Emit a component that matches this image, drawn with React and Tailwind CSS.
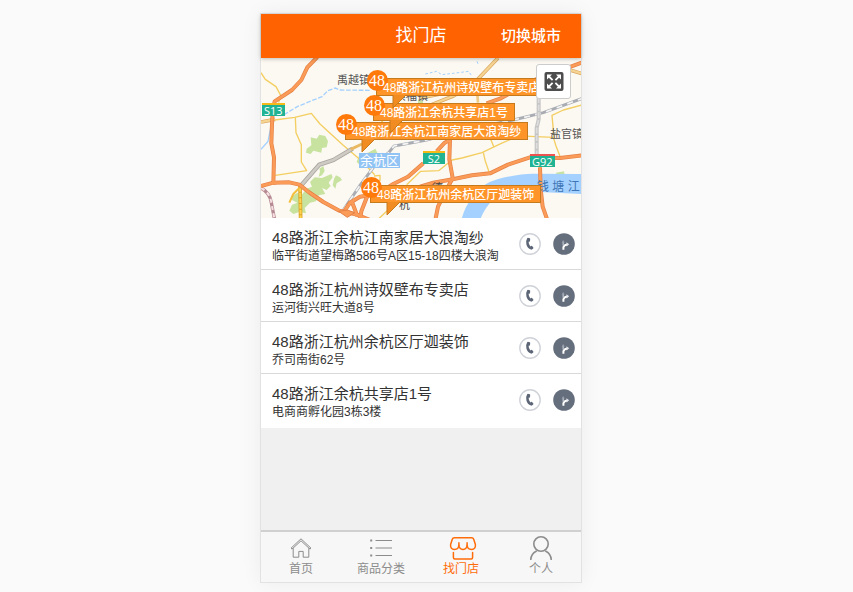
const stores = [
  { name: '48路浙江余杭江南家居大浪淘纱', address: '临平街道望梅路586号A区15-18四楼大浪淘' },
  { name: '48路浙江杭州诗奴壁布专卖店', address: '运河街兴旺大道8号' },
  { name: '48路浙江杭州余杭区厅迦装饰', address: '乔司南街62号' },
  { name: '48路浙江余杭共享店1号', address: '电商商孵化园3栋3楼' },
];

const pins = [
  { name: '48路浙江余杭江南家居大浪淘纱', place: 'left-[84px] top-[64px]' },
  { name: '48路浙江余杭共享店1号', place: 'left-[112px] top-[45px]' },
  { name: '48路浙江杭州诗奴壁布专卖店', place: 'left-[115px] top-[20px]' },
  { name: '48路浙江杭州余杭区厅迦装饰', place: 'left-[109px] top-[127px]' },
];

function MapDrawing() {
  return (
    <svg className="block h-full w-full" viewBox="3 6 960 480" preserveAspectRatio="xMinYMin slice" aria-hidden="true">
      <rect x="0" y="0" width="970" height="492" fill="#fcf9f2" />

      <g fill="#c8e3a0">
        <path d="M152 244 L170 248 L178 236 L196 240 L204 256 L200 274 L186 276 L184 290 L160 284 L152 294 L138 290 L140 278 L154 268 Z" />
        <path d="M178 338 L190 330 L194 345 L186 358 L176 362 L180 346 Z" />
        <path d="M186 366 L214 354 L218 364 L206 380 L212 390 L200 402 L186 396 L196 414 L176 418 L168 436 L150 440 L134 456 L138 472 L118 468 L100 474 L88 464 L96 446 L112 440 L96 432 L94 422 L112 410 L124 418 L140 398 L156 392 L150 378 L164 364 Z" />
        <path d="M222 368 L228 358 L240 364 L246 372 L230 382 L226 398 L218 388 Z" />
        <path d="M290 318 L298 296 L324 290 L346 278 L352 290 L336 310 L330 332 L308 334 Z" />
        <path d="M474 130 L490 136 L486 150 L474 146 Z" />
        <path d="M888 350 L912 346 L914 356 L890 357 Z" />
      </g>

      <path d="M604 492 Q614 452 636 426 Q660 384 712 370 Q780 352 822 353 L970 354 L970 414 L840 408 Q740 392 700 430 Q674 456 660 492 Z" fill="#a4d1ff" />

      <g fill="none" stroke="#a4d1ff" strokeWidth="4">
        <path d="M72 176 L112 152 L150 136 L186 122 L204 104 L226 96 L238 102 L330 103" strokeDasharray="14 5" />
        <path d="M3 280 L24 256 L34 206" />
        <path d="M496 54 L530 46 L545 56 L580 52 L626 46 L634 58 M651 16 L656 28" strokeDasharray="8 6" strokeWidth="3" />
      </g>

      <g fill="none" stroke="#f3ce61" strokeWidth="4" strokeLinejoin="round">
        <path d="M3 50 L16 70 L48 92 L62 118 L56 140" />
        <path d="M44 192 L104 184 L154 172 L180 204 L248 266 L306 316 L344 356" />
        <path d="M106 184 L108 230 L124 266 L124 318 L140 344 L46 358" />
        <path d="M340 170 L380 210 M500 250 L600 238 L700 236 L880 244 L888 270 L902 306" />
        <path d="M440 386 L482 346 L536 344 L576 312 L606 306 L666 290 L724 262 L780 238" />
        <path d="M670 290 L676 316 L688 350 M692 250 L702 274" />
        <path d="M970 146 L910 162 L876 178 L882 246" />
        <path d="M342 360 L360 358 L360 374 L340 376 M352 492 L384 462 L420 430" />
        <path d="M654 140 L650 90 L658 76" strokeWidth="8" stroke="#efcb85" />
      </g>

      <g fill="none" strokeLinejoin="round">
        <g stroke="#d8a45e" strokeWidth="11">
          <path d="M3 198 L45 190 M714 6 L634 90 L580 120 L500 152 M890 30 L970 54" />
          <path d="M480 126 L560 110 M850 30 L898 42" />
        </g>
        <g stroke="#f6d491" strokeWidth="7">
          <path d="M3 198 L45 190 M714 6 L634 90 L580 120 L500 152 M890 30 L970 54" />
          <path d="M480 126 L560 110 M850 30 L898 42" />
        </g>
        <path d="M122 492 L120 390" stroke="#d9a528" strokeWidth="11" />
        <path d="M122 492 L120 390" stroke="#ffd34e" strokeWidth="6" strokeDasharray="14 3" />
        <path d="M88 440 L100 414 L122 392" stroke="#f2bf3e" strokeWidth="6" />
      </g>

      <g fill="none">
        <path d="M250 462 L300 388 L352 318 L386 290 L402 270 L500 252 L620 220 L760 192 L850 170 L970 126" stroke="#a9adb3" strokeWidth="9" />
        <path d="M250 462 L300 388 L352 318 L386 290 L402 270 L500 252 L620 220 L760 192 L850 170 L970 126" stroke="#f4f4f4" strokeWidth="5" strokeDasharray="18 16" />
        <path d="M3 396 Q30 410 34 440 L44 492" stroke="#b58a92" strokeWidth="10" />
        <path d="M3 396 Q30 410 34 440 L44 492" stroke="#f5dfe2" strokeWidth="6" strokeDasharray="12 10" />
        <path d="M836 100 L836 190 L830 216 L830 300" stroke="#c5c5c5" strokeWidth="12" />
        <path d="M836 100 L836 190 L830 216 L830 300" stroke="#dedede" strokeWidth="5" strokeDasharray="18 5" />
        <path d="M122 390 L178 326 L220 312 L278 278" stroke="#a8a59f" strokeWidth="13" />
        <path d="M122 390 L178 326 L220 312 L278 278" stroke="#cecac4" strokeWidth="8" />
        <path d="M272 280 L306 264" stroke="#e9b963" strokeWidth="9" />
      </g>

      <g fill="none" strokeLinejoin="round">
        {[
          ['#e58045', 12],
          ['#fb9b58', 8],
        ].map(([color, width]) => (
          <g key={color} stroke={color} strokeWidth={width}>
            <path d="M172 3 L142 34 L124 72 L96 102 L44 136 L38 165 L36 204 L34 262 L42 304 L40 386" />
            <path d="M3 390 L40 380 L88 379 L118 386 L146 408 L190 438 L238 464 L290 476 L330 492" />
            <path d="M250 470 L270 440 L300 422 L352 414 L400 384 L444 362 L490 322" />
            <path d="M322 420 L304 466 L300 492 M276 438 L292 480" />
            <path d="M570 250 L568 310 L578 366 L556 408 L534 452 L526 492" />
            <path d="M480 392 L520 380 L578 370 L636 358 L690 352 L744 326 L810 304 L900 306 L970 298" />
            <path d="M970 18 L910 40 L840 64 L772 100 L720 128 L680 142" />
            <path d="M840 334 L842 400 L848 452 L862 492" />
            <path d="M530 286 L552 262 L572 250" />
          </g>
        ))}
      </g>
      <path d="M236 466 L262 462 L284 470 L262 484 Z" fill="#fb9b58" stroke="#e58045" strokeWidth="3" />
    </svg>
  );
}

function RoadBadge({ text, place }) {
  return (
    <span className={`absolute flex h-[13px] items-center justify-center border-t-2 bg-[#1fb394] px-[2px] font-['Open_Sans','Noto_Sans',sans-serif] text-[11px] leading-none font-medium text-white ${place}`}>
      {text}
    </span>
  );
}

function Pin({ name, place }) {
  return (
    <div className={`absolute isolate whitespace-nowrap ${place}`}>
      <div className="h-[18px] border border-[#c57a1e] bg-[#ff9428] px-[6px] text-[12px] leading-[18px] font-medium text-white">
        <span className="relative z-10">{name}</span>
      </div>
      <svg className="absolute top-[17px] left-4 h-[14px] w-[14px]" viewBox="0 0 14 14" aria-hidden="true">
        <path d="M1 0 V13 L14 0 Z" fill="#f08c22" />
        <path d="M1 0 V13 L14 0" fill="none" stroke="#c57a1e" />
      </svg>
      <span className="absolute -top-[8px] -left-[9px] flex h-[21px] w-[21px] items-center justify-center rounded-full bg-[#ff7a0a] pr-px font-['Liberation_Serif',serif] text-[16px] leading-none text-white">
        48
      </span>
    </div>
  );
}

function PhoneIcon() {
  return (
    <svg className="h-[22px] w-[22px]" viewBox="0 0 22 22" aria-hidden="true">
      <circle cx="11" cy="11" r="10.2" fill="#fff" stroke="#cfd2d8" strokeWidth="1.4" />
      <path d="M8.9 4.8 L10.7 5.2 Q11.3 5.4 11.2 6 L11 8 Q10.9 8.6 10.2 8.7 L9.6 8.8 Q9.6 11.6 11.4 13.4 L12.1 12.9 Q12.6 12.6 13.1 13 L14.3 14.5 Q14.7 15 14.2 15.5 Q13.2 16.8 11.9 16.6 Q8.4 15.6 7.4 11.6 Q6.6 7.4 8.2 5.2 Q8.5 4.8 8.9 4.8 Z" fill="#5d6676" />
    </svg>
  );
}

function RouteIcon() {
  return (
    <svg className="h-[22px] w-[22px]" viewBox="0 0 22 22" aria-hidden="true">
      <circle cx="11" cy="11" r="10.8" fill="#656e7d" />
      <path d="M10.4 16.8 V14.4 Q10.8 11.9 14.2 11.5" fill="none" stroke="#fff" strokeWidth="2" />
      <path d="M13.4 9.2 L16.2 11.3 L13.6 13.4 Z" fill="#e4e6e9" />
      <path d="M10.2 12.4 V8.8" fill="none" stroke="#b4b9c1" strokeWidth="1.5" />
      <path d="M8.6 9.4 L10.2 7 L11.8 9.4 Z" fill="#979eaa" />
    </svg>
  );
}

function HomeIcon() {
  return (
    <svg className="h-6 w-6" viewBox="0 0 24 24" fill="none" stroke="currentColor" strokeWidth="1" aria-hidden="true">
      <path d="M2 12.2 L12 2.8 L22 12.2 L21 13.1 L12 4.8 L3 13.1 Z" />
      <path d="M4.2 12.2 V21.2 H9.8 V15.4 H14.2 V21.2 H19.8 V12.2" />
    </svg>
  );
}

function ListIcon() {
  return (
    <svg className="h-6 w-6" viewBox="0 0 24 24" fill="none" stroke="currentColor" strokeWidth="1.1" aria-hidden="true">
      <path d="M6.5 4.5 H23 M6.5 12 H23 M6.5 19.5 H23" />
      <path d="M1.2 4.5 H3.2 M1.2 12 H3.2 M1.2 19.5 H3.2" strokeWidth="2" />
    </svg>
  );
}

function ShopIcon() {
  return (
    <svg className="h-6 w-8" viewBox="0 0 32 24" fill="none" stroke="currentColor" strokeWidth="1.5" strokeLinecap="round" strokeLinejoin="round" aria-hidden="true">
      <path d="M9.4 1.8 H26.6 Q28.2 1.8 28.7 3.2 L30.4 8.6 Q30.8 13.2 26.6 13.4 Q22.4 13.4 22.1 9.2 Q21.8 13.2 18 13.4 Q14.2 13.2 13.9 9.2 Q13.6 13.4 9.4 13.4 Q5.2 13.2 5.6 8.6 L7.3 3.2 Q7.8 1.8 9.4 1.8 Z" />
      <path d="M13.9 9.2 V6.8 M22.1 9.2 V6.8" />
      <path d="M8.4 16.6 V21.4 Q8.4 22.9 9.9 22.9 H26.1 Q27.6 22.9 27.6 21.4 V16.6" />
    </svg>
  );
}

function UserIcon() {
  return (
    <svg className="h-6 w-6" viewBox="0 0 24 24" fill="none" stroke="currentColor" strokeWidth="1.6" strokeLinecap="round" aria-hidden="true">
      <circle cx="12" cy="8" r="7.2" />
      <path d="M1.8 23.4 Q2.2 17.8 7.2 15.2 M16.8 15.2 Q21.8 17.8 22.2 23.4" />
    </svg>
  );
}

const tabs = [
  { label: '首页', Icon: HomeIcon },
  { label: '商品分类', Icon: ListIcon },
  { label: '找门店', Icon: ShopIcon, active: true },
  { label: '个人', Icon: UserIcon },
];

export default function App() {
  return (
    <div className="flex min-h-screen justify-center bg-[#fafafa] pt-[13px] pr-[11px] pb-[9px] font-['Liberation_Sans','Noto_Sans_CJK_SC',sans-serif] text-[#333]">
      <div className="flex w-full max-w-[322px] flex-col border border-[#e2e2e2] bg-[#f0f0f0] shadow-[0_0_20px_rgba(0,0,0,0.06)]">
        <header className="relative z-10 grid h-11 grid-cols-3 items-center bg-[#ff6200] text-white shadow-[0_1px_4px_rgba(0,0,0,0.25)]">
          <h1 className="col-start-2 text-center text-[17px] leading-6">找门店</h1>
          <button type="button" className="justify-self-end pr-5 text-[15px] leading-6 font-medium whitespace-nowrap">切换城市</button>
        </header>

        <main className="flex-1">
          <section className="relative h-40 overflow-hidden" aria-label="门店地图">
            <MapDrawing />
            <span className="absolute top-[14px] left-[76px] text-[11px] leading-4 text-[#555]">禹越镇</span>
            <span className="absolute top-[30px] left-[134px] text-[11px] leading-4 text-[#555]">崇福镇</span>
            <span className="absolute top-[68px] left-[289px] text-[11px] leading-4 whitespace-nowrap text-[#555]">盐官镇</span>
            <span className="absolute top-[121px] left-[276px] text-[12px] leading-4 whitespace-nowrap text-[#3f76b5]">钱 塘 江</span>
            <span className="absolute top-[122px] left-[171px] text-[11px] leading-4 text-[#444]">德</span>
            <span className="absolute top-[139px] left-[138px] text-[11px] leading-4 text-[#444]">杭</span>
            <span className="absolute top-[95px] left-[98px] bg-[#91c4f5] px-[1px] text-[13px] leading-[15px] text-white">余杭区</span>
            <RoadBadge text="S13" place="top-[45px] left-[1px] border-[#f5ba18]" />
            <RoadBadge text="S2" place="top-[93px] left-[162px] w-[22px] border-[#f5ba18]" />
            <RoadBadge text="G92" place="top-[96px] left-[269px] border-[#ee5350]" />
            {pins.map((pin) => (
              <Pin key={pin.name} {...pin} />
            ))}
            <button type="button" aria-label="全屏" className="absolute top-[6px] right-[10px] flex h-[35px] w-[35px] items-center justify-center rounded-[3px] border border-[#ccc] bg-white">
              <svg className="h-5 w-5" viewBox="0 0 20 20" aria-hidden="true">
                <rect x="0.5" y="0" width="19" height="19" rx="2" fill="#4d4d4d" />
                <path d="M3 2.5 H8 L3 7.5 Z M17 2.5 V7.5 L12 2.5 Z M3 16.5 V11.5 L8 16.5 Z M17 16.5 H12 L17 11.5 Z" fill="#fff" />
                <path d="M4 3.5 L8.6 8.1 M16 3.5 L11.4 8.1 M4 15.5 L8.6 10.9 M16 15.5 L11.4 10.9" stroke="#fff" strokeWidth="1.8" />
              </svg>
            </button>
          </section>

          <ul className="bg-white pb-[2px]">
            {stores.map((store) => (
              <li key={store.name} className="flex items-center gap-3 border-b border-[#d9d9d9] pr-[6px] pl-[11px] last:border-transparent">
                <div className="min-w-0 flex-1 pt-[9px] pb-[6px]">
                  <h2 className="truncate text-[15px] leading-[22px]">{store.name}</h2>
                  <p className="truncate text-[12px] leading-[14px]">{store.address}</p>
                </div>
                <button type="button" aria-label="拨打电话">
                  <PhoneIcon />
                </button>
                <button type="button" aria-label="导航">
                  <RouteIcon />
                </button>
              </li>
            ))}
          </ul>
        </main>

        <nav className="grid grid-cols-4 border-t-2 border-[#d0d0d0] bg-[#f7f7f7]">
          {tabs.map(({ label, Icon, active }) => (
            <a
              key={label}
              href="#"
              aria-current={active ? 'page' : undefined}
              className={`flex flex-col items-center gap-px pt-1 pb-[5px] text-[12px] leading-4 ${active ? 'text-[#ff6c0a]' : 'text-[#8c8c8c]'}`}
            >
              <Icon />
              <span>{label}</span>
            </a>
          ))}
        </nav>
      </div>
    </div>
  );
}
